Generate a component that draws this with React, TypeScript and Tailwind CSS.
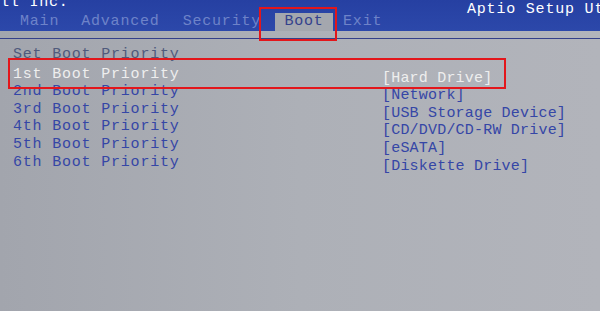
import React from 'react';

// BIOS "Boot" tab photo — Aptio setup, boot priority list

const mono = { fontFamily: '"Liberation Mono", "DejaVu Sans Mono", monospace' };

const priorities = [
  { label: '1st Boot Priority', value: '[Hard Drive]' },
  { label: '2nd Boot Priority', value: '[Network]' },
  { label: '3rd Boot Priority', value: '[USB Storage Device]' },
  { label: '4th Boot Priority', value: '[CD/DVD/CD-RW Drive]' },
  { label: '5th Boot Priority', value: '[eSATA]' },
  { label: '6th Boot Priority', value: '[Diskette Drive]' },
];

export default function App() {
  return (
    <div
      className="relative w-[600px] h-[311px] overflow-hidden bg-gradient-to-r from-[#a2a5ad] via-[#adb0b7] to-[#b2b4bb] text-[15px] tracking-[0.8px]"
      style={mono}
    >
      {/* top bar */}
      <div className="h-[31px] bg-gradient-to-b from-[#2640a2] to-[#2c48aa] flex flex-col">
        <div className="h-[13px] flex justify-between text-white">
          <span className="leading-none -mt-[5px]">ll Inc.</span>
          <span className="leading-none mt-[2px] pl-[467px] absolute whitespace-nowrap">Aptio Setup Utility</span>
        </div>
        <div className="h-[18px] flex items-stretch text-[#6e83c9]">
          <span className="ml-[20px] leading-[18px]">Main</span>
          <span className="ml-[22px] leading-[18px]">Advanced</span>
          <span className="ml-[23px] leading-[18px]">Security</span>
          <span className="ml-[14px] w-[58px] bg-[#a4a7ae] text-[#33418c] text-center leading-[18px]">Boot</span>
          <span className="ml-[10px] leading-[18px]">Exit</span>
        </div>
      </div>
      <div className="h-[7px]" />
      <div className="h-px bg-[#34408a]" />

      {/* content */}
      <div className="flex pt-[7px] leading-[17.6px]">
        <div className="w-[382px] pl-[13px] flex flex-col">
          <span className="text-[#4f5a7c] mb-[2px]">Set Boot Priority</span>
          {priorities.map((p, i) => (
            <span key={p.label} className={i === 0 ? 'text-[#eeeeee]' : 'text-[#3546a6]'}>
              {p.label}
            </span>
          ))}
        </div>
        <div className="flex flex-col pt-[23.6px] tracking-[0.2px]">
          {priorities.map((p, i) => (
            <span key={p.value} className={i === 0 ? 'text-[#eeeeee]' : 'text-[#3546a6]'}>
              {p.value}
            </span>
          ))}
        </div>
      </div>

      {/* red highlight boxes */}
      <div className="absolute left-[259px] top-[7px] w-[78px] h-[34px] border-2 border-[#e3161b]" />
      <div className="absolute left-[8px] top-[58px] w-[498px] h-[31px] border-2 border-[#e3161b]" />
    </div>
  );
}
